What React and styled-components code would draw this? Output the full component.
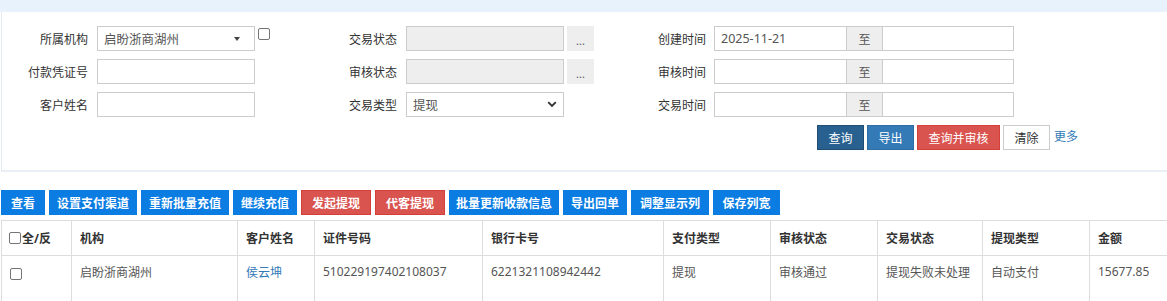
import React from "react";
import styled, { createGlobalStyle } from "styled-components";

const GlobalStyle = createGlobalStyle`
  body {
    margin: 0;
    background: #fff;
    font-family: "Noto Sans", "Noto Sans CJK SC", sans-serif;
    font-size: 12px;
    color: #333;
  }
`;

const Page = styled.div`
  padding-left: 1px;
  overflow: hidden;
`;

const TopBand = styled.div`
  height: 12px;
  margin-left: -1px;
  background: #e8f2fc;
`;

const Panel = styled.div`
  border-left: 1px solid #e3eaf1;
  border-bottom: 2px solid #e9eff5;
  padding: 14px 0 20px;
  display: flex;
  flex-direction: column;
  gap: 8px;
`;

const FormRow = styled.div`
  display: flex;
  height: 25px;
  align-items: center;
`;

const Cell = styled.div`
  width: ${({ w }) => (w ? `${w}px` : "auto")};
  display: flex;
  align-items: center;
  flex-shrink: 0;
  & > * {
    flex-shrink: 0;
  }
`;

const Label = styled.label`
  width: 86px;
  margin-right: ${({ gap }) => gap || 9}px;
  text-align: right;
  color: #333;
  white-space: nowrap;
`;

const Input = styled.div`
  box-sizing: border-box;
  width: ${({ w }) => w || 158}px;
  height: 25px;
  border: 1px solid #ccc;
  background: ${({ disabled }) => (disabled ? "#eee" : "#fff")};
  padding: 0 6px;
  display: flex;
  align-items: center;
  justify-content: space-between;
  color: #555;
  font-size: 12.5px;
`;

const DotsBtn = styled.div`
  width: 27px;
  height: 25px;
  margin-left: 3px;
  background: #eee;
  display: flex;
  align-items: flex-end;
  justify-content: center;
  padding-bottom: 5px;
  box-sizing: border-box;
  font-size: 11px;
  color: #555;
  line-height: 1;
`;

const Addon = styled.div`
  box-sizing: border-box;
  width: 35px;
  height: 25px;
  background: #eee;
  border: 1px solid #ccc;
  border-left: none;
  border-right: none;
  display: flex;
  align-items: center;
  justify-content: center;
  color: #555;
`;

const Check = styled.span`
  display: inline-block;
  box-sizing: border-box;
  width: 12px;
  height: 12px;
  border: 1px solid #767676;
  border-radius: 2px;
  background: #fff;
  margin: ${({ m }) => m || "0"};
  vertical-align: ${({ va }) => va || "middle"};
`;

const Caret = styled.span`
  width: 0;
  height: 0;
  border-left: 3px solid transparent;
  border-right: 3px solid transparent;
  border-top: 4px solid #444;
  margin-right: 8px;
`;

const Actions = styled.div`
  display: flex;
  align-items: center;
  gap: 3px;
  padding-left: 815px;
  height: 25px;
`;

const Btn = styled.button`
  box-sizing: border-box;
  height: 25px;
  width: ${({ w }) => w}px;
  padding: 0;
  font-family: inherit;
  font-size: 12px;
  border: 1px solid ${({ bd }) => bd};
  background: ${({ bg }) => bg};
  color: ${({ fg }) => fg || "#fff"};
  cursor: pointer;
`;

const MoreLink = styled.a`
  color: #337ab7;
  margin-left: 1px;
  margin-bottom: 3px;
  text-decoration: none;
`;

const Toolbar = styled.div`
  display: flex;
  gap: 4px;
  margin-top: 18px;
`;

const ToolBtn = styled.button`
  box-sizing: border-box;
  height: 25px;
  width: ${({ w }) => w}px;
  padding: 0;
  font-family: inherit;
  font-size: 12px;
  font-weight: 600;
  color: #fff;
  background: ${({ danger }) => (danger ? "#d9534f" : "#0a7ce2")};
  border: 1px solid ${({ danger }) => (danger ? "#d43f3a" : "#0a7ce2")};
`;

const TableWrap = styled.div`
  margin-top: 5px;
  overflow: hidden;
`;

const Table = styled.table`
  border-collapse: collapse;
  table-layout: fixed;
  width: 1300px;
`;

const Th = styled.th`
  height: 34px;
  padding: 0 8px;
  border: 1px solid #ddd;
  text-align: left;
  font-weight: bold;
  color: #333;
  white-space: nowrap;
`;

const Td = styled.td`
  height: 48px;
  padding: 7px 8px;
  border: 1px solid #ddd;
  border-bottom: none;
  vertical-align: top;
  color: #555;
  white-space: nowrap;
`;

const NameLink = styled.a`
  color: #337ab7;
  text-decoration: none;
`;

const ChevronDown = () => (
  <svg width="10" height="7" viewBox="0 0 10 7">
    <path d="M1.2 1.2 L5 5 L8.8 1.2" fill="none" stroke="#333" strokeWidth="1.9" />
  </svg>
);

const tools = [
  ["查看", 44],
  ["设置支付渠道", 88],
  ["重新批量充值", 88],
  ["继续充值", 64],
  ["发起提现", 70, true],
  ["代客提现", 70, true],
  ["批量更新收款信息", 110],
  ["导出回单", 64],
  ["调整显示列", 78],
  ["保存列宽", 67],
];

const cols = [70, 166, 77, 168, 181, 107, 107, 105, 107, 212];

const headers = ["机构", "客户姓名", "证件号码", "银行卡号", "支付类型", "审核状态", "交易状态", "提现类型", "金额"];

export default function App() {
  return (
    <Page>
      <GlobalStyle />
      <TopBand />
      <Panel>
        <FormRow>
          <Cell w={309}>
            <Label>所属机构</Label>
            <Input>
              启盼浙商湖州
              <Caret />
            </Input>
            <Check m="0 0 9px 3px" />
          </Cell>
          <Cell w={309}>
            <Label>交易状态</Label>
            <Input disabled />
            <DotsBtn>...</DotsBtn>
          </Cell>
          <Cell>
            <Label gap={8}>创建时间</Label>
            <Input w={133}>2025-11-21</Input>
            <Addon>至</Addon>
            <Input w={132} />
          </Cell>
        </FormRow>
        <FormRow>
          <Cell w={309}>
            <Label>付款凭证号</Label>
            <Input />
          </Cell>
          <Cell w={309}>
            <Label>审核状态</Label>
            <Input disabled />
            <DotsBtn>...</DotsBtn>
          </Cell>
          <Cell>
            <Label gap={8}>审核时间</Label>
            <Input w={133} />
            <Addon>至</Addon>
            <Input w={132} />
          </Cell>
        </FormRow>
        <FormRow>
          <Cell w={309}>
            <Label>客户姓名</Label>
            <Input />
          </Cell>
          <Cell w={309}>
            <Label>交易类型</Label>
            <Input>
              提现
              <ChevronDown />
            </Input>
          </Cell>
          <Cell>
            <Label gap={8}>交易时间</Label>
            <Input w={133} />
            <Addon>至</Addon>
            <Input w={132} />
          </Cell>
        </FormRow>
        <Actions>
          <Btn w={47} bg="#286090" bd="#204d74">查询</Btn>
          <Btn w={47} bg="#337ab7" bd="#2e6da4">导出</Btn>
          <Btn w={83} bg="#d9534f" bd="#d43f3a">查询并审核</Btn>
          <Btn w={47} bg="#fff" bd="#ccc" fg="#333">清除</Btn>
          <MoreLink href="#">更多</MoreLink>
        </Actions>
      </Panel>

      <Toolbar>
        {tools.map(([t, w, danger]) => (
          <ToolBtn key={t} w={w} danger={danger}>
            {t}
          </ToolBtn>
        ))}
      </Toolbar>

      <TableWrap>
        <Table>
          <colgroup>
            {cols.map((w, i) => (
              <col key={i} style={{ width: w }} />
            ))}
          </colgroup>
          <thead>
            <tr>
              <Th>
                <Check m="0 1px 0 -1px" va="-1px" />全/反
              </Th>
              {headers.map((h) => (
                <Th key={h}>{h}</Th>
              ))}
            </tr>
          </thead>
          <tbody>
            <tr>
              <Td>
                <Check m="5px 0 0 0" va="top" />
              </Td>
              <Td>启盼浙商湖州</Td>
              <Td>
                <NameLink href="#">侯云坤</NameLink>
              </Td>
              <Td>510229197402108037</Td>
              <Td>6221321108942442</Td>
              <Td>提现</Td>
              <Td>审核通过</Td>
              <Td>提现失败未处理</Td>
              <Td>自动支付</Td>
              <Td>15677.85</Td>
            </tr>
          </tbody>
        </Table>
      </TableWrap>
    </Page>
  );
}
